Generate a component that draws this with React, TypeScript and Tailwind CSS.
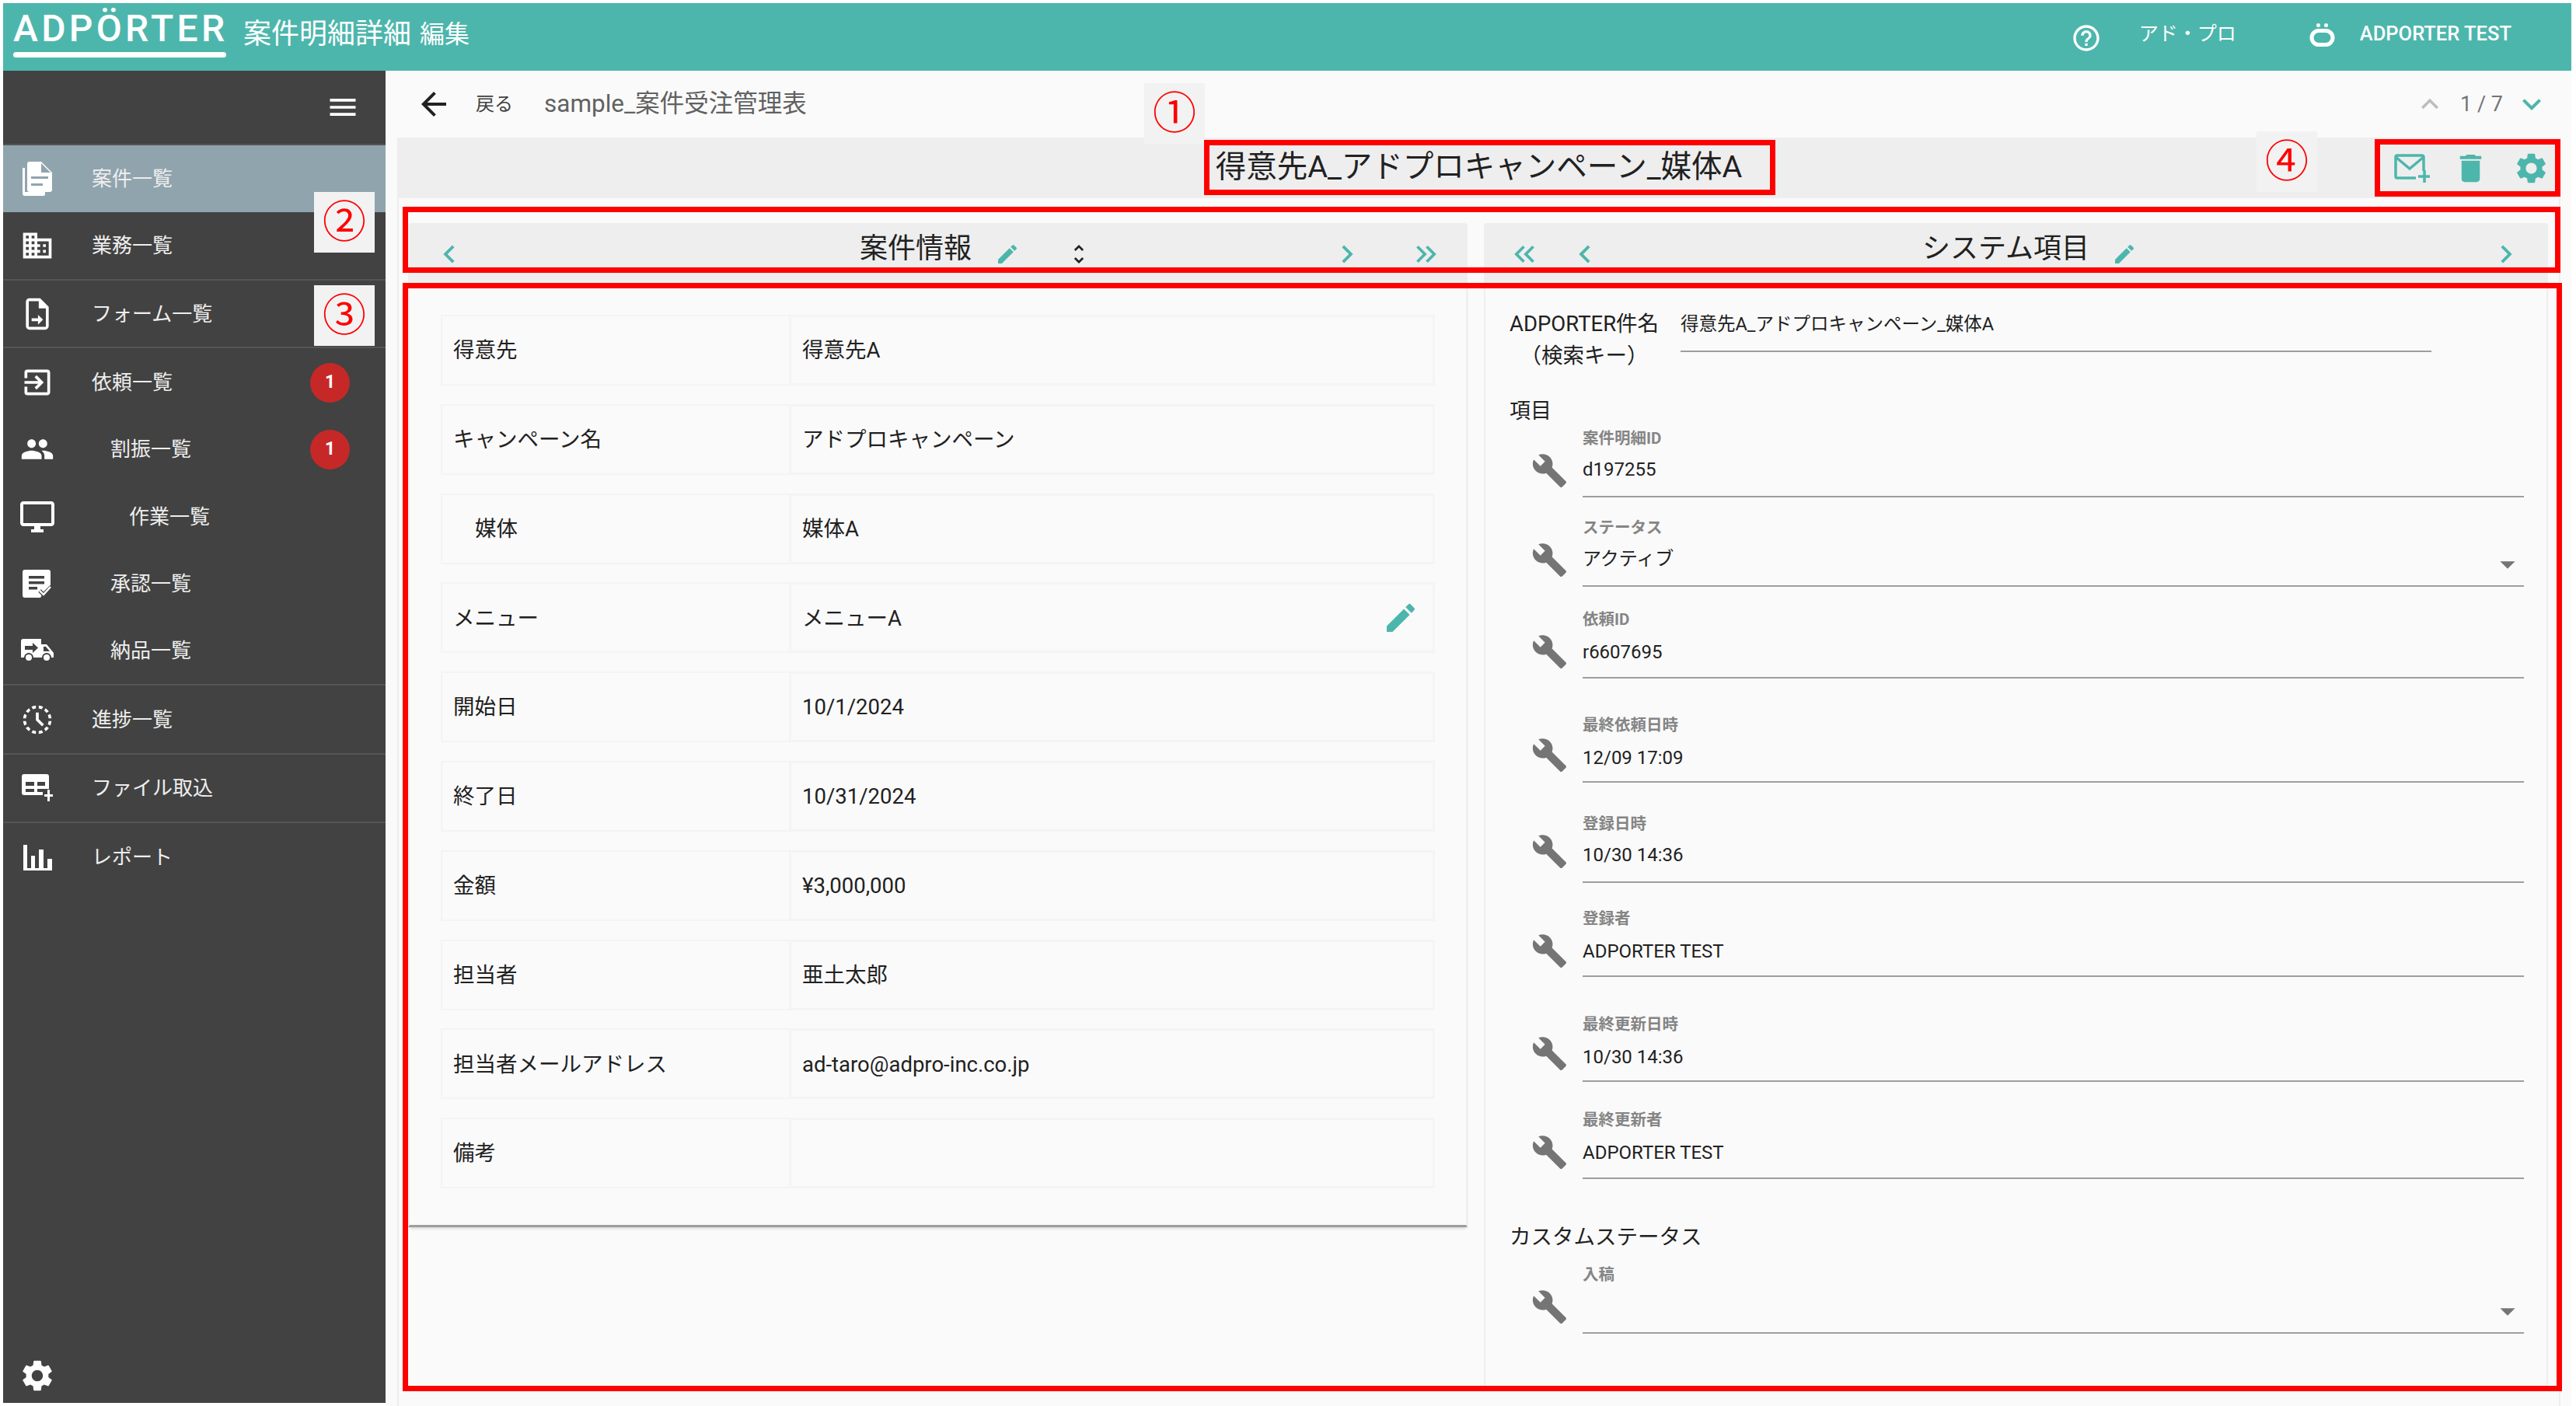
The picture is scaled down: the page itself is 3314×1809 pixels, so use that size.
import type { ReactNode } from 'react'
import {
  MdArrowBack,
  MdArrowDropDown,
  MdBuild,
  MdChevronLeft,
  MdChevronRight,
  MdDelete,
  MdDomain,
  MdEdit,
  MdExitToApp,
  MdHelpOutline,
  MdHistoryToggleOff,
  MdKeyboardArrowDown,
  MdKeyboardArrowUp,
  MdKeyboardDoubleArrowLeft,
  MdKeyboardDoubleArrowRight,
  MdMenu,
  MdOutlineDesktopWindows,
  MdPeople,
  MdSettings,
  MdUnfoldMore,
} from 'react-icons/md'

/* ── custom sidebar icons ─────────────────────────────── */
function CaseIcon() {
  return (
    <svg width="38" height="44" viewBox="0 0 38 44">
      <path d="M0 8h3v31h26v3a2 2 0 0 1-2 2H3a3 3 0 0 1-3-3z" fill="#fff" />
      <path d="M9 0h15l14 14v22a3 3 0 0 1-3 3H9a3 3 0 0 1-3-3V3a3 3 0 0 1 3-3z" fill="#fff" />
      <path d="M24 2v12h12z" fill="#90a4ae" />
      <rect x="11" y="19" width="22" height="3" fill="#90a4ae" />
      <rect x="11" y="28" width="15" height="3" fill="#90a4ae" />
    </svg>
  )
}

function FormIcon() {
  return (
    <svg width="44" height="44" viewBox="0 0 24 24" fill="#fff">
      <path d="M14 1H6.500C5.100 1 4 2.100 4 3.500v17C4 21.900 5.100 23 6.500 23h11c1.400 0 2.500-1.100 2.500-2.500V7l-6-6zM6 21V3h7v5h5v13H6z" />
      <path d="M8 15h4.500v-2.500L16 16l-3.500 3.500V17H8z" />
    </svg>
  )
}

function ApproveIcon() {
  return (
    <svg width="38" height="36" viewBox="0 0 38 36">
      <path d="M3 0h30a3 3 0 0 1 3 3v17l-9 9-4 7H3a3 3 0 0 1-3-3V3a3 3 0 0 1 3-3z" fill="#fff" />
      <rect x="8" y="8" width="20" height="3.500" fill="#424242" />
      <rect x="8" y="15" width="20" height="3.500" fill="#424242" />
      <rect x="8" y="22" width="11" height="3.500" fill="#424242" />
      <path d="M22 27l5 5 10-10" fill="none" stroke="#424242" strokeWidth="5" />
      <path d="M22 27l5 5 9-10" fill="none" stroke="#fff" strokeWidth="2.500" />
    </svg>
  )
}

function DeliveryIcon() {
  return (
    <svg width="42" height="30" viewBox="0 0 42 30">
      <path d="M3 0h23v7h7l9 11v6h-3a6 6 0 0 0-12 0H16a6 6 0 0 0-12 0H0V3a3 3 0 0 1 3-3z" fill="#fff" />
      <circle cx="10" cy="24" r="4" fill="#fff" />
      <circle cx="33" cy="24" r="4" fill="#fff" />
      <path d="M5 9h10V5l7 6.500-7 6.500v-4H5z" fill="#424242" />
      <path d="M29 10h3l5 6h-8z" fill="#424242" />
    </svg>
  )
}

function ImportIcon() {
  return (
    <svg width="40" height="36" viewBox="0 0 40 36">
      <path d="M3 0h29a3 3 0 0 1 3 3v16h-8v8H3a3 3 0 0 1-3-3V3a3 3 0 0 1 3-3z" fill="#fff" />
      <path d="M5 10h11v5H5zM20 10h10v5H20zM5 19h11v4H5zM20 19h7v4h-7z" fill="#424242" />
      <path d="M29 23h4v-6h3v6h4v3h-4v6h-3v-6h-4z" fill="#fff" transform="translate(0 3)" />
    </svg>
  )
}

function ReportIcon() {
  return (
    <svg width="37" height="33" viewBox="0 0 37 33" fill="#fff">
      <rect x="0" y="0" width="5" height="33" />
      <rect x="0" y="30" width="37" height="3" />
      <rect x="10" y="14" width="5" height="19" />
      <rect x="20" y="6" width="6" height="27" />
      <rect x="31" y="18" width="6" height="15" />
    </svg>
  )
}

function UserIcon() {
  return (
    <svg width="33" height="30" viewBox="0 0 33 30" fill="none">
      <circle cx="11.500" cy="2.500" r="2.500" fill="#fff" />
      <circle cx="21.500" cy="2.500" r="2.500" fill="#fff" />
      <rect x="3" y="9.500" width="27" height="18" rx="9" stroke="#fff" strokeWidth="5" />
    </svg>
  )
}

function MailPlusIcon() {
  return (
    <svg width="46" height="37" viewBox="0 0 46 37" fill="none" stroke="#4db6ac">
      <path d="M38 22V4a2 2 0 0 0-2-2H4a2 2 0 0 0-2 2v25a2 2 0 0 0 2 2h24" strokeWidth="3.500" />
      <path d="M2 4l18 15L38 4" strokeWidth="3.500" />
      <path d="M39 21v16M31 29h15" strokeWidth="3.500" />
    </svg>
  )
}

/* ── data ─────────────────────────────────────────────── */
const infoRows: { label: string; value: string; indent?: boolean; editable?: boolean }[] = [
  { label: '得意先', value: '得意先A' },
  { label: 'キャンペーン名', value: 'アドプロキャンペーン' },
  { label: '媒体', value: '媒体A', indent: true },
  { label: 'メニュー', value: 'メニューA', editable: true },
  { label: '開始日', value: '10/1/2024' },
  { label: '終了日', value: '10/31/2024' },
  { label: '金額', value: '¥3,000,000' },
  { label: '担当者', value: '亜土太郎' },
  { label: '担当者メールアドレス', value: 'ad-taro@adpro-inc.co.jp' },
  { label: '備考', value: '' },
]

type FieldSpec = {
  label: string
  value: string
  mt: string
  h: string
  pt: string
  wt: string
  select?: boolean
}

const fields: FieldSpec[] = [
  { label: '案件明細ID', value: 'd197255', mt: 'mt-0', h: 'h-[91px]', pt: 'pt-[9px]', wt: 'pt-[33px]' },
  { label: 'ステータス', value: 'アクティブ', mt: 'mt-[24px]', h: 'h-[91px]', pt: 'pt-[9px]', wt: 'pt-[33px]', select: true },
  { label: '依頼ID', value: 'r6607695', mt: 'mt-[27px]', h: 'h-[91px]', pt: 'pt-[11px]', wt: 'pt-[33px]' },
  { label: '最終依頼日時', value: '12/09 17:09', mt: 'mt-[45px]', h: 'h-[89px]', pt: 'pt-[11px]', wt: 'pt-[30px]' },
  { label: '登録日時', value: '10/30 14:36', mt: 'mt-[38px]', h: 'h-[91px]', pt: 'pt-[9px]', wt: 'pt-[27px]' },
  { label: '登録者', value: 'ADPORTER TEST', mt: 'mt-[31px]', h: 'h-[90px]', pt: 'pt-[11px]', wt: 'pt-[33px]' },
  { label: '最終更新日時', value: '10/30 14:36', mt: 'mt-[46px]', h: 'h-[89px]', pt: 'pt-[11px]', wt: 'pt-[29px]' },
  { label: '最終更新者', value: 'ADPORTER TEST', mt: 'mt-[34px]', h: 'h-[91px]', pt: 'pt-[11px]', wt: 'pt-[33px]' },
]

/* ── small parts ──────────────────────────────────────── */
function NavRow({
  icon,
  label,
  textMl,
  badge,
  active,
  className,
}: {
  icon: ReactNode
  label: string
  textMl: string
  badge?: boolean
  active?: boolean
  className: string
}) {
  return (
    <div className={`flex items-center ${active ? 'bg-[#90a4ae]' : ''} ${className}`}>
      <div className="flex w-[88px] shrink-0 justify-center">{icon}</div>
      <span className={`text-[26px] leading-none text-[#eeeeee] ${textMl}`}>{label}</span>
      {badge && (
        <span className="ml-auto mr-[46px] flex h-[51px] w-[51px] items-center justify-center rounded-full bg-[#c62828] text-[23px] font-bold text-white">
          1
        </span>
      )}
    </div>
  )
}

function Field({ label, value, mt, h, pt, wt, select }: FieldSpec) {
  return (
    <div className={`flex ${h} ${mt}`}>
      <div className={`w-[94px] shrink-0 pl-[28px] ${wt}`}>
        <MdBuild size={47} color="#757575" />
      </div>
      <div className="flex w-[1211px] flex-col">
        <div className="h-[30px] shrink-0 text-[20.500px] font-bold leading-[30px] text-[#858585]">{label}</div>
        <div className={`flex flex-1 items-start justify-between border-b-2 border-[#9e9e9e] ${pt}`}>
          <span className="text-[24px] leading-[32px] text-[#212121]">{value}</span>
          {select && <MdArrowDropDown size={46} color="#757575" className="-mr-[2px]" />}
        </div>
      </div>
    </div>
  )
}

function RedBox({ className }: { className: string }) {
  return <div className={`pointer-events-none absolute border-[7px] border-[#ff0000] ${className}`} />
}

function Marker({ glyph, className }: { glyph: string; className: string }) {
  return (
    <div
      className={`absolute flex h-[78px] items-center justify-center bg-[#f2f2f2] text-[56px] leading-none text-[#ff0000] ${className}`}
    >
      {glyph}
    </div>
  )
}

export default function App() {
  return (
    <div className="relative flex h-[1809px] w-[3314px] flex-col overflow-hidden bg-white pl-[4px] pr-[6px] pt-[4px] font-['Roboto','Noto_Sans_CJK_JP',sans-serif] text-[#212121]">
      {/* ── app bar ──────────────────────────────────────── */}
      <header className="flex h-[87px] shrink-0 items-center bg-[#4db6ac] pl-[13px] text-white">
        <div className="mb-[9px] flex w-[274px] flex-col">
          <span className="h-[52px] text-center text-[48px] font-medium leading-[49px] tracking-[4.300px] whitespace-nowrap">ADPÖRTER</span>
          <span className="mt-[3px] h-[7px] rounded-full bg-white" />
        </div>
        <span className="mb-[8px] ml-[22px] text-[36px] leading-none">案件明細詳細</span>
        <span className="mb-[8px] ml-[11px] text-[32px] leading-none">編集</span>
        <MdHelpOutline size={40} className="ml-auto mt-[3px]" />
        <span className="mb-[8px] ml-[48px] text-[25px] leading-none">アド・プロ</span>
        <span className="mb-[6px] ml-[94px]">
          <UserIcon />
        </span>
        <span className="mb-[8px] ml-[32px] mr-[77px] text-[25.500px] font-medium leading-none">ADPORTER TEST</span>
      </header>

      <div className="flex min-h-0 flex-1">
        {/* ── sidebar ──────────────────────────────────── */}
        <aside className="flex h-[1714px] w-[492px] shrink-0 flex-col bg-[#424242]">
          <div className="flex h-[96px] shrink-0 items-center justify-end border-b-2 border-[#555555] pr-[33px]">
            <MdMenu size={44} color="#fff" />
          </div>
          <NavRow active icon={<CaseIcon />} label="案件一覧" textMl="ml-[26px]" className="h-[86px]" />
          <NavRow icon={<MdDomain size={44} color="#fff" />} label="業務一覧" textMl="ml-[26px]" className="h-[88px] border-b-2 border-[#555555]" />
          <NavRow icon={<FormIcon />} label="フォーム一覧" textMl="ml-[26px]" className="h-[87px] border-b-2 border-[#555555]" />
          <div className="flex h-[434px] flex-col border-b-2 border-[#555555] pt-[1px]">
            <NavRow badge icon={<MdExitToApp size={44} color="#fff" />} label="依頼一覧" textMl="ml-[26px]" className="flex-1" />
            <NavRow badge icon={<MdPeople size={44} color="#fff" />} label="割振一覧" textMl="ml-[50px]" className="flex-1" />
            <NavRow icon={<MdOutlineDesktopWindows size={48} color="#fff" />} label="作業一覧" textMl="ml-[74px]" className="flex-1" />
            <NavRow icon={<ApproveIcon />} label="承認一覧" textMl="ml-[50px]" className="flex-1" />
            <NavRow icon={<DeliveryIcon />} label="納品一覧" textMl="ml-[50px]" className="flex-1" />
          </div>
          <NavRow icon={<MdHistoryToggleOff size={44} color="#fff" />} label="進捗一覧" textMl="ml-[26px]" className="h-[89px] border-b-2 border-[#555555]" />
          <NavRow icon={<ImportIcon />} label="ファイル取込" textMl="ml-[26px]" className="h-[88px] border-b-2 border-[#555555]" />
          <NavRow icon={<ReportIcon />} label="レポート" textMl="ml-[26px]" className="h-[88px]" />
          <div className="mt-auto pb-[11px] pl-[20px]">
            <MdSettings size={48} color="#fff" />
          </div>
        </aside>

        {/* ── main ─────────────────────────────────────── */}
        <main className="flex min-w-0 flex-1 flex-col bg-[#fafafa]">
          <div className="flex h-[86px] shrink-0 items-center pl-[38px]">
            <MdArrowBack size={48} color="#212121" />
            <span className="ml-[30px] text-[24px] leading-none text-[#424242]">戻る</span>
            <span className="ml-[40px] text-[31.500px] leading-none text-[#616161]">sample_案件受注管理表</span>
            <MdKeyboardArrowUp size={44} color="#bdbdbd" className="ml-auto" />
            <span className="ml-[17px] text-[27px] leading-none text-[#757575]">1 / 7</span>
            <MdKeyboardArrowDown size={48} color="#4db6ac" className="ml-[13px] mr-[27px]" />
          </div>

          <div className="ml-[15px] mr-[14px] flex min-h-0 flex-1 flex-col border-x-2 border-[#eeeeee]">
            <div className="-mx-[2px] grid h-[78px] shrink-0 grid-cols-[1fr_auto_1fr] items-center bg-[#eeeeee]">
              <div />
              <h1 className="pb-[2px] text-[39.500px] font-normal leading-none text-[#212121]">
                得意先A_アドプロキャンペーン_媒体A
              </h1>
              <div className="flex items-center justify-end pr-[14px]">
                <MailPlusIcon />
                <MdDelete size={47} color="#4db6ac" className="ml-[29px]" />
                <MdSettings size={47} color="#4db6ac" className="ml-[31px]" />
              </div>
            </div>

            <div className="grid grid-cols-[1363px_1369px] gap-x-[21px] pl-[12px] pt-[32px]">
              {/* ── 案件情報 ─────────────────────────────── */}
              <section className="flex flex-col">
                <div className="flex h-[77px] items-center rounded-t-[4px] bg-[#eeeeee]">
                  <MdChevronLeft size={46} color="#4db6ac" className="ml-[30px] mt-[3px]" />
                  <h2 className="mb-[11px] ml-[505px] w-[144px] text-[36px] font-normal leading-none whitespace-nowrap">案件情報</h2>
                  <MdEdit size={32} color="#4db6ac" className="ml-[30px] mt-[3px]" />
                  <MdUnfoldMore size={32} color="#212121" className="ml-[60px] mt-[3px]" />
                  <MdChevronRight size={46} color="#4db6ac" className="ml-[306px] mt-[3px]" />
                  <MdKeyboardDoubleArrowRight size={44} color="#4db6ac" className="ml-[57px] mt-[3px]" />
                </div>
                <div className="flex h-[1215px] flex-col gap-[23.800px] border-x-2 border-b-[3px] border-[#eeeeee] border-b-[#9e9e9e] px-[40px] pt-[41px] shadow-[0_3px_4px_-2px_#00000033]">
                  {infoRows.map((row) => (
                    <div key={row.label} className="flex h-[91px] shrink-0">
                      <div className={`flex w-[448px] shrink-0 items-center border-2 border-r-0 border-[#f4f4f4] pr-[14px] pt-[1px] text-[27.500px] leading-none ${row.indent ? 'pl-[42px]' : 'pl-[14px]'}`}>
                        {row.label}
                      </div>
                      <div className="flex flex-1 items-center justify-between border-[3px] border-[#f4f4f4] px-[14px] pt-[1px] text-[27.500px] leading-none">
                        <span>{row.value}</span>
                        {row.editable && <MdEdit size={48} color="#4db6ac" className="mr-[3px]" />}
                      </div>
                    </div>
                  ))}
                </div>
              </section>

              {/* ── システム項目 ─────────────────────────── */}
              <section className="flex flex-col">
                <div className="flex h-[77px] items-center rounded-t-[4px] bg-[#eeeeee]">
                  <MdKeyboardDoubleArrowLeft size={44} color="#4db6ac" className="ml-[30px] mt-[3px]" />
                  <MdChevronLeft size={46} color="#4db6ac" className="ml-[33px] mt-[3px]" />
                  <h2 className="mb-[11px] ml-[411px] text-[36px] font-normal leading-none whitespace-nowrap">システム項目</h2>
                  <MdEdit size={32} color="#4db6ac" className="ml-[29px] mt-[3px]" />
                  <MdChevronRight size={46} color="#4db6ac" className="ml-[452px] mt-[3px]" />
                </div>
                <div className="h-[1421px] border-x-2 border-[#eeeeee] pl-[31px] pt-[32px]">
                  <div className="flex h-[82px]">
                    <div className="w-[192px] text-center text-[27.500px] leading-[41px] whitespace-nowrap">
                      ADPORTER件名
                      <br />
                      （検索キー）
                    </div>
                    <div className="ml-[28px] h-[57px] w-[966px] border-b-2 border-[#9e9e9e] pt-[5px] text-[23.500px] leading-[32px]">
                      得意先A_アドプロキャンペーン_媒体A
                    </div>
                  </div>
                  <div className="mt-[33px] h-[36px] text-[27px] leading-[36px]">項目</div>
                  <div className="mt-[2px]">
                    {fields.map((f) => (
                      <Field key={f.label} {...f} />
                    ))}
                  </div>
                  <div className="mt-[55px] h-[40px] text-[27.500px] leading-[40px]">カスタムステータス</div>
                  <Field label="入稿" value="" mt="mt-[13px]" h="h-[91px]" pt="pt-[9px]" wt="pt-[33px]" select />
                </div>
              </section>
            </div>
          </div>
        </main>
      </div>

      {/* ── annotation overlays ──────────────────────────── */}
      <Marker glyph="①" className="left-[1472px] top-[107px] w-[78px]" />
      <Marker glyph="②" className="left-[404px] top-[247px] w-[78px]" />
      <Marker glyph="③" className="left-[404px] top-[367px] w-[78px]" />
      <Marker glyph="④" className="left-[2903px] top-[169px] w-[78px]" />
      <RedBox className="left-[1549px] top-[180px] h-[71px] w-[735px]" />
      <RedBox className="left-[518px] top-[266px] h-[85px] w-[2776px]" />
      <RedBox className="left-[518px] top-[364px] h-[1426px] w-[2778px]" />
      <RedBox className="left-[3055px] top-[179px] h-[74px] w-[239px]" />
    </div>
  )
}
